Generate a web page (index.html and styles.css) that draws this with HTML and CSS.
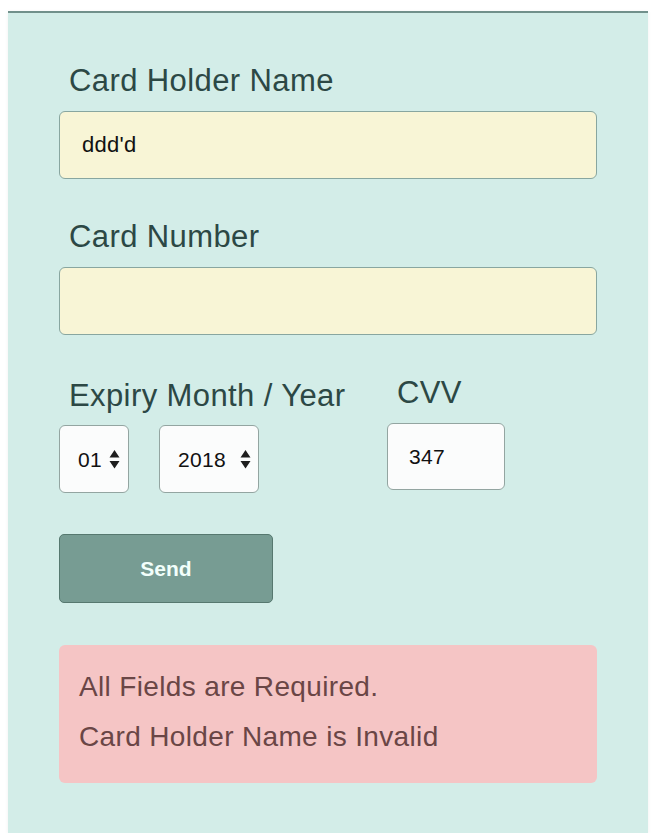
FILE: index.html
```html
<!DOCTYPE html>
<html lang="en">
<head>
<meta charset="utf-8">
<title>Payment</title>
<link rel="stylesheet" href="styles.css">
</head>
<body>
<form class="panel">
  <div class="field">
    <label class="label" for="holder">Card Holder Name</label>
    <input class="text-input" id="holder" type="text" value="ddd'd">
  </div>
  <div class="field">
    <label class="label" for="number">Card Number</label>
    <input class="text-input" id="number" type="text" value="">
  </div>
  <div class="row">
    <div class="col-expiry">
      <label class="label label-tight" for="month">Expiry Month / Year</label>
      <div class="selects">
        <div class="select-wrap select-month">
          <select class="select" id="month"><option>01</option></select>
          <svg class="arrows" width="11" height="19" viewBox="0 0 11 19"><path d="M5.5 0 L10.5 7.5 L0.5 7.5 Z M0.5 11 L10.5 11 L5.5 18.5 Z" fill="#1e1e1e"/></svg>
        </div>
        <div class="select-wrap select-year">
          <select class="select" id="year"><option>2018</option></select>
          <svg class="arrows" width="11" height="19" viewBox="0 0 11 19"><path d="M5.5 0 L10.5 7.5 L0.5 7.5 Z M0.5 11 L10.5 11 L5.5 18.5 Z" fill="#1e1e1e"/></svg>
        </div>
      </div>
    </div>
    <div class="col-cvv">
      <label class="label" for="cvv">CVV</label>
      <input class="cvv-input" id="cvv" type="text" value="347">
    </div>
  </div>
  <button class="send" type="button">Send</button>
  <div class="errors">
    <p class="error-line">All Fields are Required.</p>
    <p class="error-line">Card Holder Name is Invalid</p>
  </div>
</form>
</body>
</html>
```
FILE: styles.css
```css
html, body {
  margin: 0;
  padding: 0;
  background: #ffffff;
}

body {
  font-family: "Liberation Sans", Arial, Helvetica, sans-serif;
}

.panel {
  display: block;
  box-sizing: border-box;
  width: 640px;
  margin: 11px 0 0 8px;
  padding: 50px 51px 50px 51px;
  background: #d3ede8;
  border-top: 2px solid #71908b;
  box-shadow: 0 1px 4px rgba(0, 0, 0, 0.06);
}

.field {
  margin-bottom: 40px;
}

.label {
  display: block;
  padding-left: 10px;
  margin-bottom: 12px;
  font-size: 31px;
  line-height: 36px;
  letter-spacing: 0.4px;
  color: #2c4845;
}

.label-tight {
  margin-bottom: 11px;
}

.text-input {
  display: block;
  box-sizing: border-box;
  width: 538px;
  height: 68px;
  margin: 0;
  padding: 0 22px;
  border: 1px solid #88a6a0;
  border-radius: 6px;
  background: #f8f5d6;
  font-family: "Liberation Sans", Arial, sans-serif;
  font-size: 22px;
  letter-spacing: 0.3px;
  color: #111111;
  outline: none;
}

.row {
  display: flex;
  align-items: flex-start;
}

.col-expiry {
  width: 328px;
  padding-top: 3px;
}

.selects {
  display: flex;
  gap: 30px;
}

.select-wrap {
  position: relative;
  height: 68px;
}

.select-month {
  width: 70px;
}

.select-year {
  width: 100px;
}

.select {
  appearance: none;
  -webkit-appearance: none;
  box-sizing: border-box;
  width: 100%;
  height: 100%;
  margin: 0;
  padding: 0 0 0 18px;
  border: 1px solid #93a5a1;
  border-radius: 6px;
  background: #fbfcfc;
  font-family: "Liberation Sans", Arial, sans-serif;
  font-size: 21px;
  letter-spacing: 0.3px;
  color: #111111;
  outline: none;
}

.arrows {
  position: absolute;
  right: 8px;
  top: 25px;
  pointer-events: none;
}

.select-month .arrows {
  right: 9px;
}

.cvv-input {
  display: block;
  box-sizing: border-box;
  width: 118px;
  height: 67px;
  margin: 0;
  padding: 0 21px;
  border: 1px solid #93a5a1;
  border-radius: 6px;
  background: #fbfcfc;
  font-family: "Liberation Sans", Arial, sans-serif;
  font-size: 21px;
  letter-spacing: 0.3px;
  color: #111111;
  outline: none;
}

.send {
  display: block;
  box-sizing: border-box;
  width: 214px;
  height: 69px;
  margin: 41px 0 0 0;
  padding: 0;
  border: 1px solid #56786f;
  border-radius: 5px;
  background: #779c93;
  font-family: "Liberation Sans", Arial, sans-serif;
  font-size: 21px;
  font-weight: bold;
  color: #f2fffb;
  cursor: pointer;
}

.errors {
  box-sizing: border-box;
  width: 538px;
  height: 138px;
  margin-top: 42px;
  padding: 17px 20px 21px 20px;
  border-radius: 6px;
  background: #f5c5c5;
}

.error-line {
  margin: 0;
  font-size: 28px;
  line-height: 50px;
  letter-spacing: 0.35px;
  color: #6a4646;
}
```
